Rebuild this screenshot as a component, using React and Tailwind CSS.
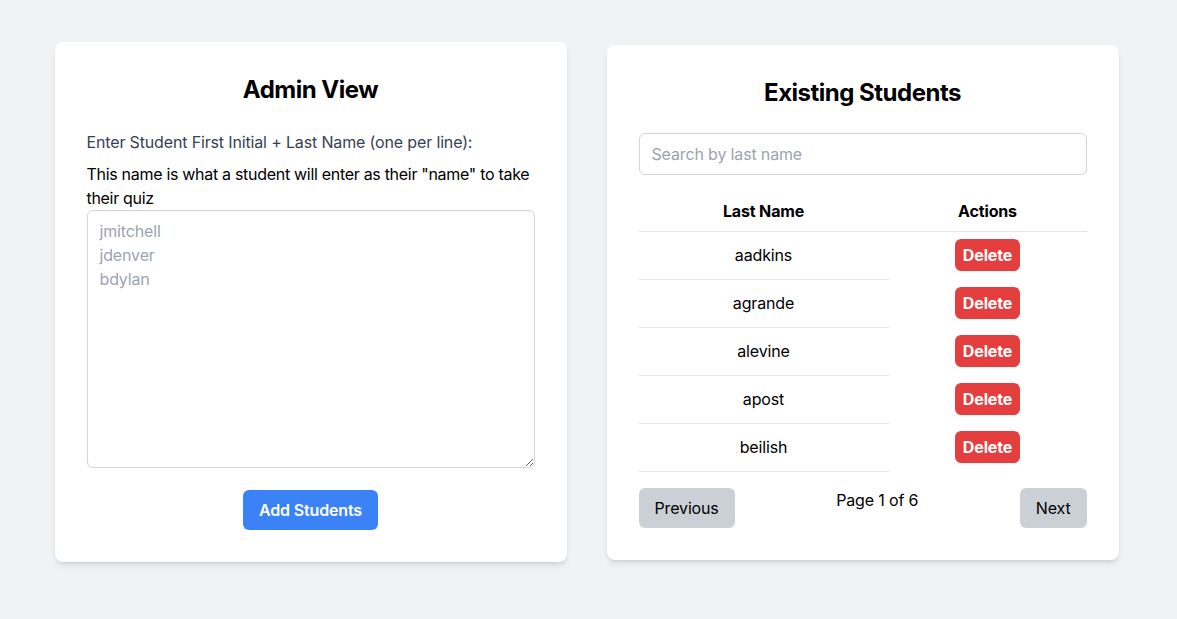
import { useState } from 'react'

const students = ['aadkins', 'agrande', 'alevine', 'apost', 'beilish']

// ── Left: admin form ───────────────────────────────────────────────────────────
const AdminCard = () => {
  const [names, setNames] = useState('')
  return (
    <div className="w-[512px] bg-white rounded-lg shadow-md p-8">
      <h2 className="text-2xl leading-8 font-bold text-center text-black tracking-[-0.5px] mb-6">Admin View</h2>
      <label className="block text-base leading-6 text-[#374151] mb-2">
        Enter Student First Initial + Last Name (one per line):
      </label>
      <p className="text-base leading-6 text-black tracking-[-0.3px]">
        This name is what a student will enter as their "name" to take their quiz
      </p>
      <textarea
        rows={10}
        value={names}
        onChange={(e) => setNames(e.target.value)}
        placeholder={'jmitchell\njdenver\nbdylan'}
        className="block w-full border border-[#d1d5db] rounded-md px-3 py-2 text-base leading-6 placeholder:text-[#9ca3af] outline-none"
      />
      <div className="flex justify-center mt-[22px]">
        <button className="bg-[#3b82f6] text-white font-semibold text-base leading-6 px-4 py-2 rounded-md">
          Add Students
        </button>
      </div>
    </div>
  )
}

// ── Right: student list ────────────────────────────────────────────────────────
const StudentsCard = () => {
  const [query, setQuery] = useState('')
  return (
    <div className="w-[512px] bg-white rounded-lg shadow-md p-8">
      <h2 className="text-2xl leading-8 font-bold text-center text-black tracking-[-0.5px] mb-6">Existing Students</h2>
      <input
        value={query}
        onChange={(e) => setQuery(e.target.value)}
        placeholder="Search by last name"
        className="block w-full border border-[#d1d5db] rounded-md px-3 py-2 text-base leading-6 placeholder:text-[#9ca3af] outline-none mb-4"
      />
      <table className="w-full border-collapse text-base leading-6 text-black">
        <thead>
          <tr className="border-b border-[#e5e7eb]">
            <th className="w-[250px] py-2 font-bold text-center">Last Name</th>
            <th className="py-2 font-bold text-center">Actions</th>
          </tr>
        </thead>
        <tbody>
          {students.map((s) => (
            <tr key={s}>
              <td className="h-[48px] text-center border-b border-[#e5e7eb]">{s}</td>
              <td className="h-[48px] text-center">
                <button className="bg-[#e53e3e] text-white font-bold px-2 py-1 rounded-md">Delete</button>
              </td>
            </tr>
          ))}
        </tbody>
      </table>
      <div className="flex justify-between mt-4">
        <button className="bg-[#cbd0d6] text-black px-4 py-2 rounded-md leading-6">Previous</button>
        <span className="leading-6">Page 1 of 6</span>
        <button className="bg-[#cbd0d6] text-black px-4 py-2 rounded-md leading-6">Next</button>
      </div>
    </div>
  )
}

export default function App() {
  return (
    <div className="min-h-screen bg-[#f0f2f5] font-['Inter',sans-serif] tracking-[-0.15px] flex justify-center items-center gap-10 pt-[42px] pb-[57px] pr-1">
      <AdminCard />
      <StudentsCard />
    </div>
  )
}
